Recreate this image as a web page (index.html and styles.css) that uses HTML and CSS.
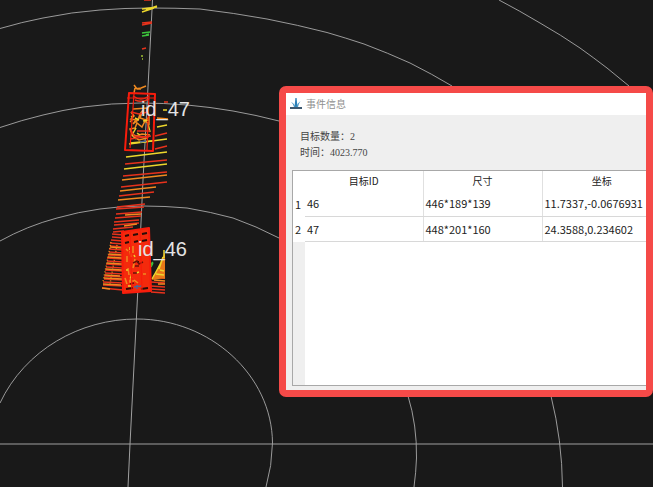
FILE: index.html
```html
<!DOCTYPE html>
<html lang="zh-CN">
<head>
<meta charset="utf-8">
<title>事件信息</title>
<link rel="stylesheet" href="styles.css">
</head>
<body>
<main class="viewer">
  <svg class="scene" viewBox="0 0 653 487" preserveAspectRatio="xMinYMin slice" role="img" aria-label="点云">
    <!-- range rings -->
    <g class="ring">
      <path d="M0 403C25 350 80 319 137 319C210 319 272 375 272.500 443Q272 466 266 487"/>
      <path d="M0 241Q27 226 57 218Q78 212 100 209Q121 206 143 206Q165 206 187 208Q211 212 233 218Q256 226 279 238Q376 290 408 396Q417 425 416.500 458Q416 472 414 487"/>
      <path d="M0 127.500Q22 120 43 115Q63 110 83 107Q112 103 140 103Q164 103 187 105Q210 107 233 111Q256 115 279 121Q480 180 551 396Q562 440 562.500 487"/>
      <path d="M0 28.500Q22 22 43 18Q72 12 100 10Q125 8 150 8Q175 8 200 9Q234 13 267 19Q298 25 327 32.500Q346 38 364 44Q388 53 410 63Q432 74 452 86"/>
      <path d="M499 0Q520 11 540 23Q561 35 580 48Q594 58 607 68L629 86"/>
    </g>
    <path class="axis" d="M0 444H653M152.500 0L148 87L143 180L137.700 293L130 444L128 487"/>

    <!-- distant returns -->
    <g class="cloud">
      <path class="red" d="M144 0h7M142 25l10-2M142 23l10-1M142 49l4-1"/>
      <path class="yellow" d="M142 9l15-2M142 12l12-4M146 10l11-4"/>
      <path class="green" d="M142 33l8-1M142 36l7-1M146 35l3-1"/>
      <path class="lime" d="M141 56h2M142 59h1"/>
      <path class="orange" d="M134 85l3 4l4-1l5-2M135 88l6 1M135 88l-1 5"/>
    </g>

    <!-- sweep lines between the two targets -->
    <g class="cloud">
      <path class="red" d="M164 102h4M155 136l12-3M155 149l12-3M125 164l42-4M123 176l44-4M121 187l46-5M119 196l35-4M117 207l28-3M116 209l28-2M116 214l26-2M115 218l26-2M114 222l25-2M114 225l25-2M113 229l20-2"/>
      <path class="yellow" d="M163 110h4M157 127l10-2M129 144l38-5M126 157l41-5M124 169l43-5"/>
      <path class="orange" d="M157 118l11 1M122 180l45-5M120 191l36-4M118 200l32-3M125 215l16-1M124 226l13-2"/>
    </g>

    <!-- target 47 -->
    <g class="cloud">
      <path class="orange" d="M131 112l3 4l-3 3l5 1l-3 4l5-4l2-6l3-4l-3 8l6 2l3-3v7l-4-3l-3 6l-5-4l-2 5l-5 1l2 5l4 2l6-2l8 1M130 122l3-3M133 109l15-1M134 137l5 3l8-2"/>
      <path class="yellow" d="M130 143l22-2M135 118l4 2M143 121l6-1M137 133l3 2M131 117l2-1M136 128l-4 7l4 4M148 124l2 8"/>
      <path class="red" d="M131 112l8 2l9-2M131 130l3 6l15 1M133 96q8 6 16 0M135 100q7 3 14-1M130 139l21-3M137 131h13"/>
      <path class="blue" d="M140 142l6-1"/>
    </g>
    <path class="box" d="M129 93L155 94L153 151L125 150Z"/>
    <path class="box inner" d="M127 98H154M134 94L130 148M149 95L147 150"/>

    <!-- target 46 : ground returns -->
    <g class="cloud">
      <path class="red" d="M113 232l11-1M112 234l12 1M112 237l12 1M111 240l12 1M110 243l13 1M110 246l13 1M109 249l14 1M109 252l14 1M108 255l15 1M107 258l16 1M107 261l16 1M106 264l17 1M106 267l17 1M105 270l18 1M105 273l18 1M104 276l19 1M104 279l19 1M103 282l20 1M103 285l20 1M102 288l21 2"/>
      <path class="orange" d="M110 247l12 1M109 254l14 1M108 257l14 1M107 263l15 1M106 269l16 1M105 275l15 1M104 278l18 1M103 284l18 1M102 288l8 1"/>
      <path class="orange dotted" d="M111 242l-8 40M117 245l-7 39"/>
      <path class="red" d="M151 282l14 1M151 286l14 1M151 289l14 1M151 292l14 1M156 278h9"/>
      <path class="orange" d="M154 280l11 1M158 284h7M153 276l12 2M158 270l7 1"/>
    </g>
    <path class="wedge" d="M165 252L152 280L165 278Z"/>
    <path class="cloud yellow" d="M164 250v8M163 257l-4 12M161 263l-9 16M160 270l4 1M156 274l8 1"/>
    <path class="cloud green" d="M149 266l4-4M151 267l2-4"/>

    <!-- target 46 : body -->
    <path class="solid" d="M122 232L149 228L151 291L123 293Z"/>
    <path class="slot" d="M125 236l4-1M133 235l5-1M142 234l5-1M125 243l4-1M134 242l4-1M142 241l5-1M126 289l7-1M141 289l7-1M137 262h2"/>
    <g class="cloud">
      <path class="orange" d="M126 249l2 2M127 256v6M130 251l1 6M133 246v7M135 259l-2 9M128 268l1 7M131 274l-1 9M125 278l2 6M134 280l4 3M143 274h3M129 281h5"/>
      <path class="yellow" d="M130 247v3M134 255l1 2M126 270h2M130 277l2 1M136 273l3-1M128 286h3"/>
      <path class="dark" d="M133 263l4-2l2 3l4-2M135 266h4M133 273h4M130 284l4-1"/>
      <path class="blue" d="M134 287l8-1M137 285v4"/>
    </g>
    <path class="box" d="M122 232L149 228L151 291L123 293Z"/>
    <path class="box inner" d="M130 232L132 291M140 231L142 291"/>

    <text class="tag" x="141" y="116">id_47</text>
    <text class="tag" x="138" y="256">id_46</text>
  </svg>

  <section class="dialog" aria-labelledby="dialog-title">
    <header class="titlebar">
      <svg class="logo" viewBox="0 0 12 12" aria-hidden="true">
        <path class="logo-spike" d="M5.400 0H6.600L7.500 9H4.500Z"/>
        <path class="logo-leaf" d="M1 4Q4 5 5.500 9H4Q3.500 6 1 4ZM10.500 3Q7.500 5 6.500 9H8Q8.500 6 10.500 3Z"/>
        <path class="logo-base" d="M0 9H12V11H0Z"/>
      </svg>
      <h1 class="title" id="dialog-title">事件信息</h1>
    </header>
    <div class="summary">
      <p>目标数量：2</p>
      <p>时间：4023.770</p>
    </div>
    <div class="grid">
      <table>
        <colgroup><col class="c-index"><col class="c-id"><col class="c-size"><col class="c-pos"></colgroup>
        <thead>
          <tr><td></td><th scope="col">目标ID</th><th scope="col">尺寸</th><th scope="col">坐标</th></tr>
        </thead>
        <tbody>
          <tr><th scope="row">1</th><td>46</td><td>446*189*139</td><td>11.7337,-0.0676931</td></tr>
          <tr><th scope="row">2</th><td>47</td><td>448*201*160</td><td>24.3588,0.234602</td></tr>
        </tbody>
      </table>
      <div class="blank"></div>
    </div>
  </section>
</main>
</body>
</html>
```
FILE: styles.css
```css
* { box-sizing: border-box; }

body {
  margin: 0;
  padding-right: 2px;
  background: #fff;
  font-family: "Noto Sans CJK SC", sans-serif;
}

.viewer {
  position: relative;
  min-height: 100vh;
  background: #191919;
  overflow: hidden;
}

.scene {
  position: absolute;
  inset: 0;
  width: 100%;
  height: 100%;
  fill: none;
}

.ring { stroke: #a8a8a8; stroke-width: 0.9; }
.axis { stroke: #a0a0a0; stroke-width: 1; }
.cloud { stroke-width: 1.5; }
.red { stroke: #e8321c; }
.orange { stroke: #f08a20; }
.yellow { stroke: #ecd62c; }
.lime { stroke: #a0c030; }
.green { stroke: #3cc43c; }
.blue { stroke: #4a6a9a; }
.dark { stroke: #6a1008; }
.dotted { stroke-dasharray: 1 2; }
.box { stroke: #f81c0c; stroke-width: 2; stroke-linejoin: round; }
.inner { stroke-width: 1.2; }
.solid { fill: #f42a0c; }
.wedge { fill: #e87818; }
.slot { stroke: #2a0c08; stroke-width: 2; }

.tag {
  fill: #e4e4e4;
  font: 20px "Liberation Sans", sans-serif;
}

.dialog {
  position: relative;
  width: 374px;
  max-width: 100%;
  margin: 86px 0 0 auto;
  border: 7px solid #f54a48;
  border-radius: 7px;
  padding-bottom: 4px;
  background: #efefef;
  color: #222;
}

.titlebar {
  display: flex;
  align-items: center;
  gap: 4px;
  height: 22px;
  padding-left: 4px;
  background: #fff;
}

.logo { width: 12px; height: 12px; }
.logo-spike { fill: #2c80b8; }
.logo-leaf { fill: #4a9ac8; }
.logo-base { fill: #3c5870; }

.title {
  margin: 0;
  font-size: 10px;
  line-height: 18px;
  font-weight: 400;
  color: #909090;
}

.summary {
  padding: 14px 14px 9px;
  font: 10px/16px "Liberation Serif", "Noto Sans CJK SC", serif;
  color: #444;
}

.summary p { margin: 0; }

.grid {
  margin-left: 6px;
  border: 1px solid #a8a8a8;
  border-right: 0;
  background: #fff;
  overflow: hidden;
}

table {
  width: 368px;
  table-layout: fixed;
  border-collapse: collapse;
  font-size: 11px;
  line-height: 16px;
}

.c-index { width: 12px; }
.c-id { width: 118px; }
.c-size { width: 119px; }

th, td {
  height: 25px;
  padding: 0 0 0 2px;
  font-weight: 400;
  text-align: left;
  white-space: nowrap;
}

thead th, thead td { height: 20px; }

thead th {
  padding: 0;
  font-size: 10px;
  text-align: center;
}

tbody td { border-bottom: 1px solid #d8d8d8; }
th + th, td + td { border-left: 1px solid #e0e0e0; }

.blank {
  height: 143px;
  border-left: 12px solid #efefef;
}
```
